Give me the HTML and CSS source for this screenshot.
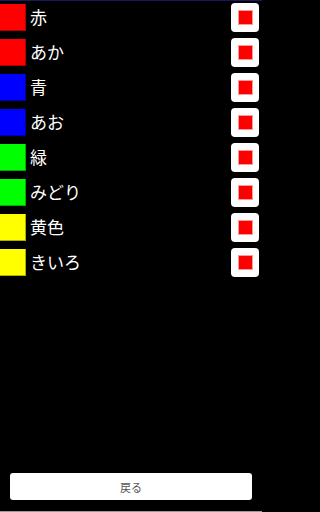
FILE: index.html
```html
<!DOCTYPE html>
<html lang="ja">
<head>
<meta charset="utf-8">
<link rel="stylesheet" href="styles.css">
</head>
<body>
<div class="app">
  <ul class="list">
    <li class="row"><span class="swatch red"></span><span class="label">赤</span><span class="check"><span class="mark"></span></span></li>
    <li class="row"><span class="swatch red"></span><span class="label">あか</span><span class="check"><span class="mark"></span></span></li>
    <li class="row"><span class="swatch blue"></span><span class="label">青</span><span class="check"><span class="mark"></span></span></li>
    <li class="row"><span class="swatch blue"></span><span class="label">あお</span><span class="check"><span class="mark"></span></span></li>
    <li class="row"><span class="swatch green"></span><span class="label">緑</span><span class="check"><span class="mark"></span></span></li>
    <li class="row"><span class="swatch green"></span><span class="label">みどり</span><span class="check"><span class="mark"></span></span></li>
    <li class="row"><span class="swatch yellow"></span><span class="label">黄色</span><span class="check"><span class="mark"></span></span></li>
    <li class="row"><span class="swatch yellow"></span><span class="label">きいろ</span><span class="check"><span class="mark"></span></span></li>
  </ul>
  <div class="footer">
    <button class="back">戻る</button>
  </div>
</div>
</body>
</html>
```

FILE: styles.css
```css
html, body {
  margin: 0;
  padding: 0;
  background: #000;
  height: 512px;
  overflow: hidden;
}
body {
  font-family: "Noto Sans CJK JP", "Noto Sans", sans-serif;
}
.app {
  position: relative;
  display: flex;
  flex-direction: column;
  width: 262px;
  height: 512px;
}
.app::before {
  content: "";
  position: absolute;
  left: 0;
  right: 0;
  top: 0;
  height: 1px;
  background: #1c1660;
}
.app::after {
  content: "";
  position: absolute;
  left: 0;
  right: 0;
  bottom: 0;
  height: 1px;
  background: #9a9a9a;
}
.list {
  list-style: none;
  margin: 0;
  padding: 0;
  flex: 1;
}
.row {
  display: flex;
  align-items: center;
  height: 35px;
}
.swatch {
  width: 26px;
  height: 27px;
  flex: none;
}
.red { background: #ff0000; box-shadow: inset -1px -1px 0 #b00000; }
.blue { background: #0000ff; box-shadow: inset -1px -1px 0 #0000b0; }
.green { background: #00ff00; box-shadow: inset -1px -1px 0 #00b000; }
.yellow { background: #ffff00; box-shadow: inset -1px -1px 0 #b0b000; }
.label {
  flex: 1;
  margin-left: 4px;
  color: #fff;
  font-size: 17px;
  line-height: 20px;
  margin-top: -2px;
}
.check {
  width: 28px;
  height: 29px;
  margin-right: 3px;
  background: #fff;
  border-radius: 4px;
  display: flex;
  align-items: center;
  justify-content: center;
  flex: none;
}
.mark {
  width: 13px;
  height: 13px;
  background: #ff0000;
  box-shadow: 0 0 0 1px #ff9a9a;
}
.footer {
  padding: 0 10px 12px 10px;
}
.back {
  display: block;
  width: 242px;
  height: 27px;
  border: none;
  border-radius: 3px;
  background: #fff;
  color: #555;
  font-family: "Noto Sans CJK JP", sans-serif;
  font-size: 11px;
  padding: 0;
}
```
